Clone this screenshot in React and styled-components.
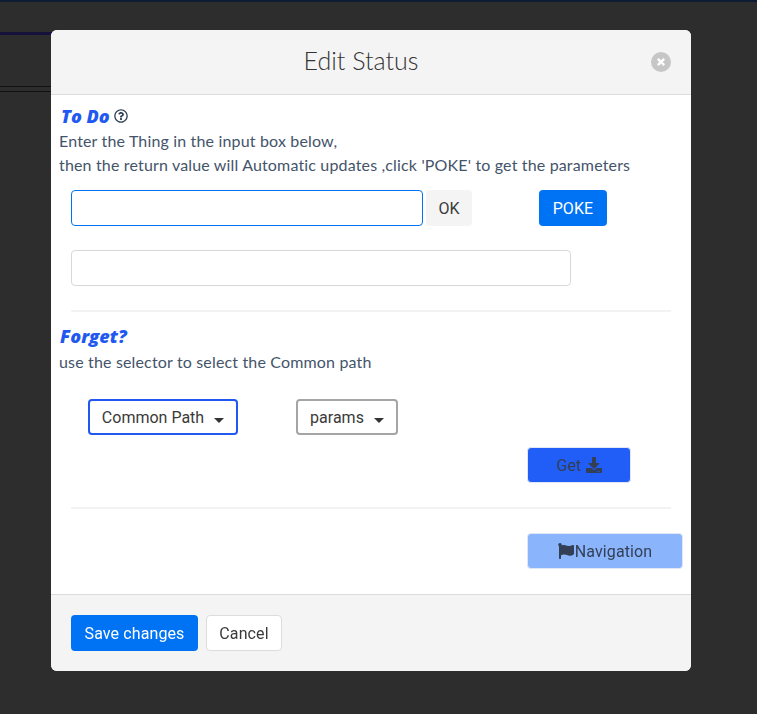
import React from 'react';
import styled, { createGlobalStyle } from 'styled-components';
import { FaDownload, FaFlag, FaRegQuestionCircle } from 'react-icons/fa';

const GlobalStyle = createGlobalStyle`
  html, body {
    margin: 0;
    padding: 0;
    background: #2d2d2d;
    overflow: hidden;
  }
  * {
    box-sizing: border-box;
  }
`;

const Page = styled.div`
  height: 714px;
  background: #2d2d2d;
`;

const TopBar = styled.div`
  height: 2px;
  background: #0c1d31;
`;

const TabLine = styled.div`
  width: 60px;
  height: 3px;
  margin-top: 30px;
  background: #14123a;
`;

const RuleLine = styled.div`
  width: 60px;
  height: 1px;
  margin-top: ${props => props.$gap}px;
  background: #111;
`;

const Overlay = styled.div`
  position: fixed;
  top: 30px;
  left: 51px;
`;

const Modal = styled.div`
  width: 640px;
  height: 641px;
  display: flex;
  flex-direction: column;
  background: #fff;
  border-radius: 6px;
  overflow: hidden;
`;

const Header = styled.div`
  height: 65px;
  display: flex;
  align-items: center;
  justify-content: center;
  position: relative;
  background: #f4f4f4;
  border-bottom: 1px solid #dcdcdc;
`;

const Title = styled.h5`
  margin: 0 20px 4px 0;
  font-family: 'Lato', sans-serif;
  font-size: 25px;
  font-weight: 300;
  color: #333;
`;

const CloseButton = styled.button`
  position: absolute;
  top: 22px;
  right: 20px;
  width: 20px;
  height: 20px;
  padding: 0;
  border: none;
  border-radius: 50%;
  background: #c6c6c6;
  display: flex;
  align-items: center;
  justify-content: center;
`;

const Body = styled.div`
  flex: 1;
  padding: 10px 8px 0;
  font-family: 'Lato', sans-serif;
  color: #44546a;
`;

const Heading = styled.div`
  display: flex;
  align-items: center;
  gap: 4px;
  height: 22px;
  margin-left: ${props => props.$indent}px;
  font-family: 'Open Sans', sans-serif;
  font-size: 18px;
  font-weight: 800;
  font-style: italic;
  color: #2159f0;

  svg {
    width: 14px;
    height: 14px;
    color: #2f3f55;
  }
`;

const Copy = styled.div`
  margin-top: ${props => props.$top}px;
  font-size: 16px;
  line-height: 24px;
  letter-spacing: 0.16px;
`;

const InputRow = styled.div`
  display: flex;
  margin: 13px 0 0 12px;
`;

const TextInput = styled.input`
  display: block;
  width: ${props => props.$width}px;
  height: 36px;
  padding: 0 12px;
  background: #fff;
  border-radius: 4px;
  outline: none;
  border: 1px solid ${props => (props.$focused ? '#0073f5' : '#d8d8d8')};
`;

const Button = styled.button`
  height: 36px;
  padding: 0;
  width: ${props => props.$width}px;
  margin-left: ${props => props.$left || 0}px;
  font-family: 'Roboto', sans-serif;
  font-size: 16px;
  letter-spacing: 0.1px;
  color: ${props => props.$color};
  background: ${props => props.$bg};
  border: 1px solid ${props => props.$border || 'transparent'};
  border-radius: 4px;
  display: flex;
  align-items: center;
  justify-content: center;
  gap: ${props => props.$gap || 0}px;

  svg {
    width: 16px;
    height: 16px;
  }
`;

const SecondInputRow = styled.div`
  margin: 24px 0 0 12px;
`;

const Divider = styled.div`
  height: 2px;
  width: 600px;
  margin: ${props => props.$top}px 0 0 12px;
  background: #f3f3f3;
`;

const SectionHeading = styled.div`
  margin-top: 13px;
`;

const SelectRow = styled.div`
  display: flex;
  margin: 25px 0 0 29px;
`;

const SelectBox = styled.div`
  width: ${props => props.$width}px;
  height: 36px;
  margin-left: ${props => props.$left || 0}px;
  padding-top: 1px;
  display: flex;
  align-items: center;
  justify-content: center;
  gap: 10px;
  font-family: 'Roboto', sans-serif;
  font-size: 16px;
  color: #3a3a3a;
  background: #fff;
  border: 2px solid ${props => props.$border};
  border-radius: 4px;
`;

const Caret = styled.span`
  width: 0;
  height: 0;
  margin-top: 5px;
  border-left: 5px solid transparent;
  border-right: 5px solid transparent;
  border-top: 5px solid #333;
`;

const ActionRow = styled.div`
  display: flex;
  margin: ${props => props.$top}px 0 0 468px;
`;

const Footer = styled.div`
  height: 77px;
  display: flex;
  gap: 8px;
  padding: 20px;
  background: #f4f4f4;
  border-top: 1px solid #dcdcdc;
`;

const App = () => (
  <>
    <GlobalStyle />
    <Page>
      <TopBar />
      <TabLine />
      <RuleLine $gap={51} />
      <RuleLine $gap={4} />
      <Overlay>
        <Modal>
          <Header>
            <Title>Edit Status</Title>
            <CloseButton aria-label="Close">
              <svg width="10" height="10" viewBox="0 0 10 10">
                <path d="M1.8 1.8l6.4 6.4M8.2 1.8l-6.4 6.4" stroke="#fff" strokeWidth="2.4" />
              </svg>
            </CloseButton>
          </Header>
          <Body>
            <Heading $indent={2}>
              To Do <FaRegQuestionCircle />
            </Heading>
            <Copy $top={2}>
              Enter the Thing in the input box below,
              <br />
              then the return value will Automatic updates ,click 'POKE' to get the parameters
            </Copy>
            <InputRow>
              <TextInput $width={352} $focused />
              <Button $width={46} $left={3} $bg="#f4f4f4" $color="#3a3a3a">OK</Button>
              <Button $width={68} $left={67} $bg="#0073f5" $color="#fff">POKE</Button>
            </InputRow>
            <SecondInputRow>
              <TextInput $width={500} />
            </SecondInputRow>
            <Divider $top={24} />
            <SectionHeading>
              <Heading $indent={1}>Forget?</Heading>
            </SectionHeading>
            <Copy $top={3}>use the selector to select the Common path</Copy>
            <SelectRow>
              <SelectBox $width={150} $border="#2159f0">Common Path <Caret /></SelectBox>
              <SelectBox $width={102} $left={58} $border="#a5a5a5">params <Caret /></SelectBox>
            </SelectRow>
            <ActionRow $top={12}>
              <Button $width={104} $bg="#215ef8" $border="#dfe6f5" $color="#333f55">
                Get&nbsp;<FaDownload />
              </Button>
            </ActionRow>
            <Divider $top={24} />
            <ActionRow $top={24}>
              <Button $width={156} $gap={1} $bg="#8ab4fb" $border="#dfe6f5" $color="#333f55">
                <FaFlag />Navigation
              </Button>
            </ActionRow>
          </Body>
          <Footer>
            <Button $width={127} $bg="#0073f5" $color="#fff">Save changes</Button>
            <Button $width={76} $bg="#fff" $border="#dcdcdc" $color="#3a3a3a">Cancel</Button>
          </Footer>
        </Modal>
      </Overlay>
    </Page>
  </>
);

export default App;
